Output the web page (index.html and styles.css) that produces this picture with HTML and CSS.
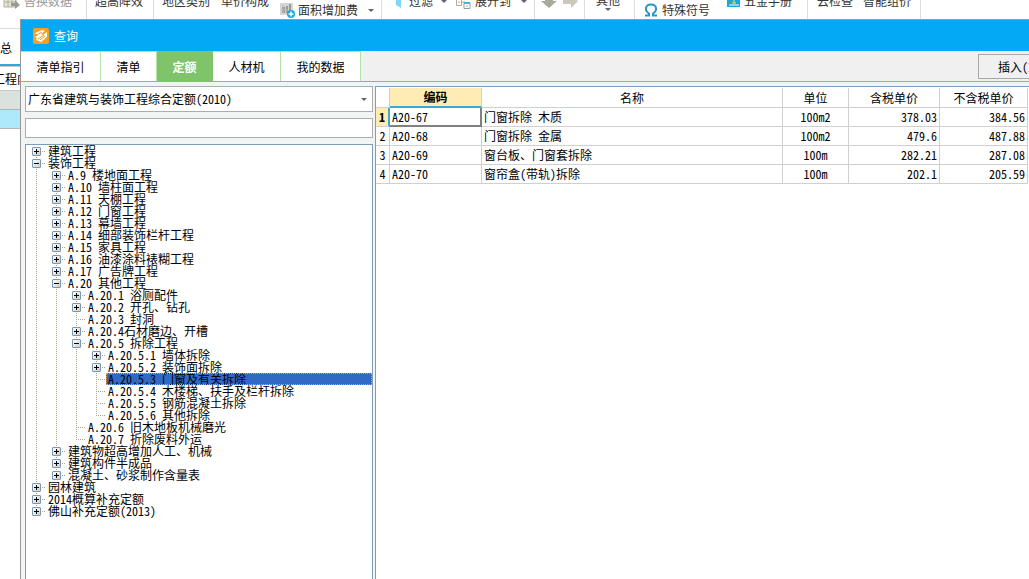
FILE: index.html
```html
<!DOCTYPE html>
<html lang="zh-CN">
<head>
<meta charset="utf-8">
<title>查询</title>
<link rel="stylesheet" href="styles.css">
</head>
<body>
<header class="toolbar">
  <div class="group g-replace">
    <button class="tool high muted"><svg width="17" height="16" viewBox="0 0 17 16"><path d="M1 0h12v14H1z" fill="#e6e6d2" stroke="#b0b09c"/><path d="M1 5h12M1 9h12M5 0v14M9 0v14" stroke="#b0b09c"/><path d="M8 10h4V7l5 5-5 4v-3H8z" fill="#999"/></svg><span>替换数据</span></button>
  </div>
  <div class="group g-high"><button class="tool high">超高降效</button></div>
  <div class="group g-price">
    <button class="tool high">地区类别</button>
    <button class="tool high">单价构成</button>
    <button class="tool low area"><svg width="16" height="16" viewBox="0 0 16 16"><path d="M0 1h13v12H0z" fill="#d6d6d6"/><path d="M2 5h3v6H2zM6 4h2v7H6zM9 2h2v8H9z" fill="#999"/><path d="M1 8h8M3 3v8" stroke="#bbb"/><circle cx="11" cy="12" r="4" fill="#16a9e1"/><path d="M8.500 12h5M11 9.500v5" stroke="#fff" stroke-width="1.500"/></svg><span>面积增加费</span><i class="caret"></i></button>
  </div>
  <div class="group g-filter">
    <button class="tool high"><svg width="5" height="16" viewBox="0 0 5 16"><path d="M0 0h5v15l-5-3z" fill="#7fd6f5"/></svg><span>过滤</span><i class="caret"></i></button>
    <button class="tool high expand"><svg width="16" height="16" viewBox="0 0 16 16"><path d="M1.500 4.500h5v8h-5z" fill="#fff" stroke="#aaa"/><path d="M3 9h2M7 9h3" stroke="#c9a45c"/><path d="M9 9.500h6v6H9z" fill="#fff" stroke="#999"/><path d="M9 9h6v2H9z" fill="#33b5e5"/><path d="M11 13h2" stroke="#c9a45c"/></svg><span>展开到</span><i class="caret"></i></button>
  </div>
  <div class="group g-move">
    <button class="tool high" aria-label="下移"><svg width="16" height="16" viewBox="0 0 16 16"><path d="M4 0h8v8h4l-8 7-8-7h4z" fill="#aaa99b"/></svg></button>
    <button class="tool high" aria-label="右移"><svg width="15" height="16" viewBox="0 0 15 16"><path d="M0 6h8V2l7 6-7 7v-4H0z" fill="#c9c8ba"/></svg></button>
  </div>
  <div class="group g-other"><button class="tool stack"><span>其他</span><i class="caret"></i></button></div>
  <div class="group g-symbol">
    <button class="tool low"><svg width="14" height="14" viewBox="0 0 14 14"><path d="M1 12.500h4v-2C0 7 1.500 1.500 7 1.500S14 7 9 10.500v2h4" fill="none" stroke="#2995c9" stroke-width="2"/></svg><span>特殊符号</span></button>
    <button class="tool high"><svg width="13" height="16" viewBox="0 0 13 16"><path d="M0 1h13v13H0z" fill="#1aa7dd"/><path d="M5 5h4M7 5v5M5 10h4" stroke="#f5e34b"/><path d="M2 12h10" stroke="#fff"/></svg><span>五金手册</span></button>
  </div>
  <div class="group g-cloud">
    <button class="tool high">云检查</button>
    <button class="tool high">智能组价</button>
  </div>
</header>
<div class="workspace">
  <aside class="behind">
    <div class="behind-gap"></div>
    <div class="behind-tab">总</div>
    <div class="behind-head"><span>工程内</span></div>
    <div class="behind-row grey"></div>
    <div class="behind-row cyan"></div>
  </aside>
  <main class="dialog">
    <div class="titlebar">
      <svg width="16" height="16" viewBox="0 0 16 16"><rect width="16" height="16" rx="2" fill="#f6a01f"/><path d="M2 5l7-3 3 1-4 3 2 1 4-3v5l-6 5-5-2 1-2-2-1 3-2z" fill="#fff"/><path d="M4 7l5-3M5 11l6-4M7 12l5-4" stroke="#f39a1c"/></svg>
      <h1>查询</h1>
    </div>
    <nav class="tabs">
      <button class="tab t-guide">清单指引</button>
      <button class="tab t-list">清单</button>
      <button class="tab t-quota active">定额</button>
      <button class="tab t-labor">人材机</button>
      <button class="tab t-mine">我的数据</button>
      <div class="insert-clip"><button class="insert">插入<span class="n">(I)</span></button></div>
    </nav>
    <div class="content">
      <section class="side">
        <button class="combo" aria-label="定额库"><span>广东省建筑与装饰工程综合定额<span class="n">(2010)</span></span><i class="caret"></i></button>
        <input class="search" type="text" aria-label="查找">
        <div class="tree">
          <ul>
            <li><div class="row"><button class="exp plus" aria-label="展开"></button><span class="label">建筑工程</span></div></li>
            <li><div class="row"><button class="exp" aria-label="折叠"></button><span class="label">装饰工程</span></div>
              <ul>
                <li><div class="row"><button class="exp plus" aria-label="展开"></button><span class="label"><span class="n">A.9 </span>楼地面工程</span></div></li>
                <li><div class="row"><button class="exp plus" aria-label="展开"></button><span class="label"><span class="n">A.10 </span>墙柱面工程</span></div></li>
                <li><div class="row"><button class="exp plus" aria-label="展开"></button><span class="label"><span class="n">A.11 </span>天棚工程</span></div></li>
                <li><div class="row"><button class="exp plus" aria-label="展开"></button><span class="label"><span class="n">A.12 </span>门窗工程</span></div></li>
                <li><div class="row"><button class="exp plus" aria-label="展开"></button><span class="label"><span class="n">A.13 </span>幕墙工程</span></div></li>
                <li><div class="row"><button class="exp plus" aria-label="展开"></button><span class="label"><span class="n">A.14 </span>细部装饰栏杆工程</span></div></li>
                <li><div class="row"><button class="exp plus" aria-label="展开"></button><span class="label"><span class="n">A.15 </span>家具工程</span></div></li>
                <li><div class="row"><button class="exp plus" aria-label="展开"></button><span class="label"><span class="n">A.16 </span>油漆涂料裱糊工程</span></div></li>
                <li><div class="row"><button class="exp plus" aria-label="展开"></button><span class="label"><span class="n">A.17 </span>广告牌工程</span></div></li>
                <li><div class="row"><button class="exp" aria-label="折叠"></button><span class="label"><span class="n">A.20 </span>其他工程</span></div>
                  <ul>
                    <li><div class="row"><button class="exp plus" aria-label="展开"></button><span class="label"><span class="n">A.20.1 </span>浴厕配件</span></div></li>
                    <li><div class="row"><button class="exp plus" aria-label="展开"></button><span class="label"><span class="n">A.20.2 </span>开孔、钻孔</span></div></li>
                    <li><div class="row leaf"><span class="label"><span class="n">A.20.3 </span>封洞</span></div></li>
                    <li><div class="row"><button class="exp plus" aria-label="展开"></button><span class="label"><span class="n">A.20.4</span>石材磨边、开槽</span></div></li>
                    <li><div class="row"><button class="exp" aria-label="折叠"></button><span class="label"><span class="n">A.20.5 </span>拆除工程</span></div>
                      <ul>
                        <li><div class="row"><button class="exp plus" aria-label="展开"></button><span class="label"><span class="n">A.20.5.1 </span>墙体拆除</span></div></li>
                        <li><div class="row"><button class="exp plus" aria-label="展开"></button><span class="label"><span class="n">A.20.5.2 </span>装饰面拆除</span></div></li>
                        <li><div class="row leaf"><span class="label selected"><span class="n">A.20.5.3 </span>门窗及有关拆除</span></div></li>
                        <li><div class="row leaf"><span class="label"><span class="n">A.20.5.4 </span>木楼梯、扶手及栏杆拆除</span></div></li>
                        <li><div class="row leaf"><span class="label"><span class="n">A.20.5.5 </span>钢筋混凝土拆除</span></div></li>
                        <li><div class="row leaf"><span class="label"><span class="n">A.20.5.6 </span>其他拆除</span></div></li>
                      </ul></li>
                    <li><div class="row leaf"><span class="label"><span class="n">A.20.6 </span>旧木地板机械磨光</span></div></li>
                    <li><div class="row leaf"><span class="label"><span class="n">A.20.7 </span>折除废料外运</span></div></li>
                  </ul></li>
                <li><div class="row"><button class="exp plus" aria-label="展开"></button><span class="label">建筑物超高增加人工、机械</span></div></li>
                <li><div class="row"><button class="exp plus" aria-label="展开"></button><span class="label">建筑构件半成品</span></div></li>
                <li><div class="row"><button class="exp plus" aria-label="展开"></button><span class="label">混凝土、砂浆制作含量表</span></div></li>
              </ul></li>
            <li><div class="row"><button class="exp plus" aria-label="展开"></button><span class="label">园林建筑</span></div></li>
            <li><div class="row"><button class="exp plus" aria-label="展开"></button><span class="label"><span class="n">2014</span>概算补充定额</span></div></li>
            <li><div class="row"><button class="exp plus" aria-label="展开"></button><span class="label">佛山补充定额<span class="n">(2013)</span></span></div></li>
          </ul>
        </div>
      </section>
      <section class="grid-panel">
        <table>
          <colgroup><col class="c-num"><col class="c-code"><col><col class="c-unit"><col class="c-tax"><col class="c-net"></colgroup>
          <thead><tr><th></th><th class="on">编码</th><th>名称</th><th>单位</th><th>含税单价</th><th>不含税单价</th></tr></thead>
          <tbody>
            <tr><td class="num cur"><span class="n">1</span></td><td class="focus"><span class="n">A20-67</span></td><td>门窗拆除<span class="n"> </span>木质</td><td class="mid"><span class="n">100m2</span></td><td class="val"><span class="n">378.03</span></td><td class="val"><span class="n">384.56</span></td></tr>
            <tr><td class="num"><span class="n">2</span></td><td><span class="n">A20-68</span></td><td>门窗拆除<span class="n"> </span>金属</td><td class="mid"><span class="n">100m2</span></td><td class="val"><span class="n">479.6</span></td><td class="val"><span class="n">487.88</span></td></tr>
            <tr><td class="num"><span class="n">3</span></td><td><span class="n">A20-69</span></td><td>窗台板、门窗套拆除</td><td class="mid"><span class="n">100m</span></td><td class="val"><span class="n">282.21</span></td><td class="val"><span class="n">287.08</span></td></tr>
            <tr><td class="num"><span class="n">4</span></td><td><span class="n">A20-70</span></td><td>窗帘盒<span class="n">(</span>带轨<span class="n">)</span>拆除</td><td class="mid"><span class="n">100m</span></td><td class="val"><span class="n">202.1</span></td><td class="val"><span class="n">205.59</span></td></tr>
          </tbody>
        </table>
      </section>
    </div>
  </main>
</div>
</body>
</html>
```

FILE: styles.css
```css
* { box-sizing: border-box; }
body {
  margin: 0;
  height: 100vh;
  display: flex;
  flex-direction: column;
  overflow: hidden;
  background: #fff;
  color: #000;
  font: 12px/16px "Noto Sans CJK SC", sans-serif;
}
button {
  font: inherit;
  color: inherit;
  background: none;
  border: 0;
  padding: 0;
  margin: 0;
  white-space: nowrap;
}
svg { display: block; flex: none; }

/* Half-width characters: six pixels each, half of a Chinese character */
.n {
  font-family: "Noto Sans Mono CJK SC", "DejaVu Sans Mono", monospace;
  font-size: 12px;
  line-height: 0;
  white-space: pre;
}
.caret {
  border: 3px solid transparent;
  border-top-color: #5f6375;
  border-bottom: 0;
  flex: none;
}

/* Toolbar */
.toolbar { display: flex; height: 19px; overflow: hidden; color: #333; flex: none; }
.group {
  display: flex;
  align-items: flex-end;
  border-right: 1px solid #dcdcdc;
  flex: none;
  height: 19px;
}
.tool { display: flex; align-items: center; gap: 4px; height: 16px; }
.high { margin-bottom: 10px; }
.low { margin-bottom: 1px; }
.muted { color: #999; }
.g-replace { width: 87px; padding-left: 3px; }
.g-high { width: 67px; padding-left: 8px; }
.g-price { width: 228px; padding-left: 8px; gap: 11px; }
.area { gap: 2px; }
.area .caret { margin-left: 8px; }
.g-filter { width: 153px; padding-left: 14px; gap: 8px; }
.g-filter .tool { gap: 8px; }
.g-filter .expand { gap: 4px; }
.g-filter .expand .caret { margin-left: 6px; }
.g-move { width: 50px; padding-left: 6px; gap: 6px; }
.g-other { width: 50px; padding-left: 11px; }
.stack { flex-direction: column; gap: 0; height: 19px; margin-bottom: 8px; }
.g-symbol { width: 173px; padding-left: 9px; gap: 17px; }
.g-cloud { width: 113px; padding-left: 9px; gap: 10px; }

/* Window edge showing left of the dialog */
.workspace { display: flex; flex: 1; min-height: 0; }
.behind { width: 20px; overflow: hidden; flex: none; }
.behind-gap { height: 10px; border-bottom: 1px solid #dcdcdc; }
.behind-tab { height: 37px; line-height: 38px; border-bottom: 2px solid #2ea7e0; }
.behind-head { height: 25px; line-height: 24px; border-top: 1px solid #c8c8c8; border-bottom: 1px solid #c8c8c8; white-space: nowrap; }
.behind-head span { margin-left: -7px; }
.behind-row { height: 19px; border-bottom: 1px solid #b4b4b4; }
.grey { background: #d9e2dd; }
.cyan { background: #ade8fb; }

/* Dialog */
.dialog {
  flex: 1;
  min-width: 0;
  display: flex;
  flex-direction: column;
  border: 1px solid #999;
  border-width: 1px 0 0 1px;
  background: #f2f4f3;
}
.titlebar { height: 31px; flex: none; display: flex; align-items: center; gap: 5px; padding-left: 12px; background: #03a9f4; color: #fff; }
.titlebar h1 { margin: 0; font-size: 12px; font-weight: 400; }
.tabs { display: flex; height: 31px; flex: none; border-bottom: 1px solid #7dc56c; background: #f0f0f0; }
.tab { background: #fff; border-right: 1px solid #b3e2a6; border-top: 1px solid #b3e2a6; }
.tab.active { background: #7fc36a; color: #fff; font-weight: 700; border-color: #7fc36a; }
.t-guide { width: 80px; }
.t-list { width: 56px; }
.t-quota { width: 56px; }
.t-labor { width: 68px; }
.t-mine { width: 80px; }
.insert-clip { margin-left: auto; width: 51px; overflow: hidden; padding-top: 3px; }
.insert { width: 80px; height: 25px; border: 1px solid #a8a8a8; text-align: left; padding-left: 19px; }

.content { flex: 1; min-height: 0; display: flex; gap: 2px; padding: 4px 0 0 4px; }
.side { width: 348px; flex: none; display: flex; flex-direction: column; }
.combo {
  height: 26px;
  flex: none;
  display: flex;
  align-items: center;
  justify-content: space-between;
  padding: 0 5px 0 2px;
  border: 1px solid #abadb3;
  background: #fff;
}
.search { height: 20px; flex: none; margin: 6px 0; border: 1px solid #abadb3; border-radius: 0; background: #fff; font: inherit; padding: 0 3px; outline: 0; }
.tree { flex: 1; min-height: 0; overflow: hidden; border: 1px solid #7f9db9; border-bottom: 0; background: #fff; padding-left: 6px; line-height: 12px; }
.tree ul { list-style: none; margin: 0; padding: 0; }
.tree ul ul { margin-left: 20px; }
.tree li {
  background: repeating-linear-gradient(to bottom, #a9a694 0 1px, transparent 1px 2px) 4px 0 / 1px 100% no-repeat;
}
.tree li:last-child { background-size: 1px 7px; }
.tree > ul > li:first-child { background-size: 1px 6px; background-position: 4px 6px; }
.row {
  display: flex;
  align-items: center;
  height: 12px;
  background: repeating-linear-gradient(to right, #a9a694 0 1px, transparent 1px 2px) 10px 6px / 4px 1px no-repeat;
}
.row.leaf { padding-left: 14px; background-position: 4px 6px; background-size: 10px 1px; }
.exp {
  width: 9px;
  height: 9px;
  flex: none;
  margin-right: 5px;
  border: 1px solid #7898b5;
  border-radius: 1px;
  background:
    linear-gradient(#000, #000) center / 5px 1px no-repeat,
    linear-gradient(135deg, #fff, #d2cec2);
}
.exp.plus {
  background:
    linear-gradient(#000, #000) center / 5px 1px no-repeat,
    linear-gradient(#000, #000) center / 1px 5px no-repeat,
    linear-gradient(135deg, #fff, #d2cec2);
}
.label { flex: 1; height: 12px; padding-left: 2px; white-space: nowrap; }
.selected { background: #316ac5; outline: 1px dotted #e0a04a; outline-offset: -1px; }

/* Result grid */
.grid-panel { flex: 1; min-width: 0; border: 1px solid #7f9db9; border-width: 1px 0 0 1px; background: #fff; padding: 1px 1px 0 0; }
table { width: 100%; table-layout: fixed; border-collapse: separate; border-spacing: 0; }
th, td { padding: 0; border-right: 1px solid #d0d0d0; border-bottom: 1px solid #d0d0d0; overflow: hidden; white-space: nowrap; }
th { height: 20px; font-weight: 400; }
td { height: 19px; padding-left: 2px; }
.c-num { width: 14px; }
.c-code { width: 92px; }
.c-unit { width: 66px; }
.c-tax { width: 91px; }
.c-net { width: 88px; }
th.on { background: #ffecb3; font-weight: 700; border-bottom: 2px solid #39a9d6; }
.num { padding: 0; text-align: center; }
.cur { background: #ffecb3; font-weight: 700; border-right: 2px solid #39a9d6; }
.focus { border-right: 2px solid #808080; border-bottom: 2px solid #808080; }
.mid { padding: 0; text-align: center; }
.val { padding: 0 2px 0 0; text-align: right; }
```
